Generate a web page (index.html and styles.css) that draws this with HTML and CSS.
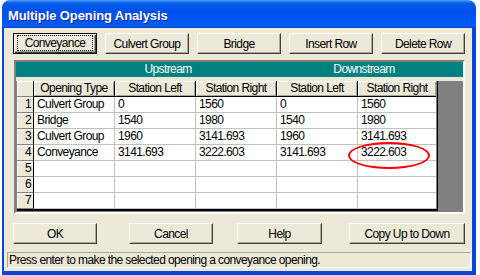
FILE: index.html
```html
<!DOCTYPE html>
<html lang="en">
<head>
    <meta charset="UTF-8">
    <title>Multiple Opening Analysis</title>
    <link rel="stylesheet" href="styles.css">
</head>
<body>
    <div class="window">
        <div class="titlebar"><span class="title">Multiple Opening Analysis</span></div>
        <div class="frame">
            <div class="toolbar">
                <button class="btn default"><span class="focus">Conveyance</span></button>
                <button class="btn">Culvert Group</button>
                <button class="btn">Bridge</button>
                <button class="btn">Insert Row</button>
                <button class="btn">Delete Row</button>
            </div>

            <div class="grid-frame">
                <div class="band">
                    <span class="band-up">Upstream</span>
                    <span class="band-down">Downstream</span>
                </div>
                <div class="grid">
                    <div class="hd num"></div>
                    <div class="hd">Opening Type</div>
                    <div class="hd">Station Left</div>
                    <div class="hd">Station Right</div>
                    <div class="hd">Station Left</div>
                    <div class="hd">Station Right</div>

                    <div class="num">1</div>
                    <div class="cell">Culvert Group</div>
                    <div class="cell">0</div>
                    <div class="cell">1560</div>
                    <div class="cell">0</div>
                    <div class="cell">1560</div>

                    <div class="num">2</div>
                    <div class="cell">Bridge</div>
                    <div class="cell">1540</div>
                    <div class="cell">1980</div>
                    <div class="cell">1540</div>
                    <div class="cell">1980</div>

                    <div class="num">3</div>
                    <div class="cell">Culvert Group</div>
                    <div class="cell">1960</div>
                    <div class="cell">3141.693</div>
                    <div class="cell">1960</div>
                    <div class="cell">3141.693</div>

                    <div class="num">4</div>
                    <div class="cell">Conveyance</div>
                    <div class="cell">3141.693</div>
                    <div class="cell">3222.603</div>
                    <div class="cell">3141.693</div>
                    <div class="cell marked">3222.603<span class="ring"></span></div>

                    <div class="num">5</div>
                    <div class="cell"></div>
                    <div class="cell"></div>
                    <div class="cell"></div>
                    <div class="cell"></div>
                    <div class="cell"></div>

                    <div class="num">6</div>
                    <div class="cell"></div>
                    <div class="cell"></div>
                    <div class="cell"></div>
                    <div class="cell"></div>
                    <div class="cell"></div>

                    <div class="num">7</div>
                    <div class="cell"></div>
                    <div class="cell"></div>
                    <div class="cell"></div>
                    <div class="cell"></div>
                    <div class="cell"></div>
                </div>
            </div>

            <div class="actions">
                <button class="btn">OK</button>
                <button class="btn cancel">Cancel</button>
                <button class="btn help">Help</button>
                <button class="btn copy">Copy Up to Down</button>
            </div>

            <div class="status">Press enter to make the selected opening a conveyance opening.</div>
        </div>
    </div>
</body>
</html>
```

FILE: styles.css
```css
body {
    margin: 0;
    background: #fff;
    font-family: "Liberation Sans", Arial, sans-serif;
    font-size: 12px;
    letter-spacing: -0.6px;
    color: #000;
}
.window {
    width: 474px;
    margin-left: 2px;
}
.titlebar {
    height: 28px;
    border-radius: 8px 8px 0 0;
    background: linear-gradient(#4a9bff 0, #0a5fe8 3px, #0055e6 7px, #0050ee 45%, #0058f5 80%, #0a5ef0 90%, #0042d0 100%);
    display: flex;
    align-items: center;
    padding-left: 6px;
}
.title {
    color: #fff;
    font-weight: bold;
    font-size: 13px;
    letter-spacing: -0.1px;
    text-shadow: 1px 1px 0 #0a2a8a;
    padding-top: 2px;
}
.frame {
    background: #ece9d8;
    border: 0 solid #0845d8;
    border-width: 0 4px 4px 2px;
    padding: 5px 0 3px 0;
}
.btn {
    box-sizing: border-box;
    width: 84px;
    height: 21px;
    padding: 0;
    background: #ece9d8;
    border: 1px solid;
    border-color: #fff #404040 #404040 #fff;
    box-shadow: inset -1px -1px 0 #aca899;
    font-family: inherit;
    font-size: 12px;
    letter-spacing: -0.6px;
    color: #000;
}
.btn.default {
    border-color: #000;
    box-shadow: inset 1px 1px 0 #fff, inset -1px -1px 0 #404040, inset -2px -2px 0 #aca899;
    display: flex;
    padding: 1px 3px 2px 3px;
}
.focus {
    flex: 1;
    border: 1px dotted #000;
    display: flex;
    align-items: center;
    justify-content: center;
}
.toolbar {
    display: flex;
    gap: 8px;
    padding-left: 9px;
}
.grid-frame {
    margin: 6px 0 0 10px;
    width: 451px;
    box-sizing: border-box;
    border: 2px solid;
    border-color: #808080 #fff #fff #808080;
    background: #808080;
    padding-bottom: 1px;
}
.band {
    display: flex;
    height: 15px;
    line-height: 15px;
    background: #008080;
    color: #fff;
    border-bottom: 4px solid #ece9d8;
}
.band-up {
    width: 304px;
    text-align: center;
}
.band-down {
    width: 88px;
    text-align: center;
}
.grid {
    display: grid;
    grid-template-columns: 17px 81px 81px 81px 81px 78px;
    grid-auto-rows: 16px;
    width: 420px;
    margin-left: 1px;
    border-right: 1px solid #000;
    border-bottom: 2px solid #000;
    line-height: 15px;
}
.grid > div {
    box-sizing: border-box;
    white-space: nowrap;
}
.hd {
    background: #ece9d8;
    text-align: center;
    border-right: 1px solid #000;
    border-bottom: 1px solid #000;
    box-shadow: inset 1px 1px 0 #fff, inset -1px -1px 0 #aca899;
}
.num {
    background: #ece9d8;
    text-align: right;
    padding-right: 2px;
    border-right: 1px solid #000;
    border-bottom: 1px solid #808080;
    box-shadow: inset 1px 1px 0 #fff;
}
.cell {
    background: #fff;
    padding-left: 3px;
    border-right: 1px solid #c0c0c0;
    border-bottom: 1px solid #c0c0c0;
}
.grid > div:nth-child(6n) {
    border-right: 0;
}
.marked {
    position: relative;
}
.ring {
    position: absolute;
    left: -10px;
    top: -3px;
    width: 82px;
    height: 27px;
    box-sizing: border-box;
    border: 2px solid #f00;
    border-radius: 50%;
}
.actions {
    display: flex;
    margin-top: 9px;
    padding-left: 9px;
}
.cancel {
    margin-left: 32px;
}
.help {
    margin-left: 24px;
    width: 85px;
}
.copy {
    margin-left: 27px;
    width: 116px;
}
.status {
    margin: 8px 1px 0 3px;
    height: 16px;
    line-height: 14px;
    box-sizing: border-box;
    border: 1px solid;
    border-color: #aca899 #fff #fff #aca899;
    padding-left: 1px;
}
```
